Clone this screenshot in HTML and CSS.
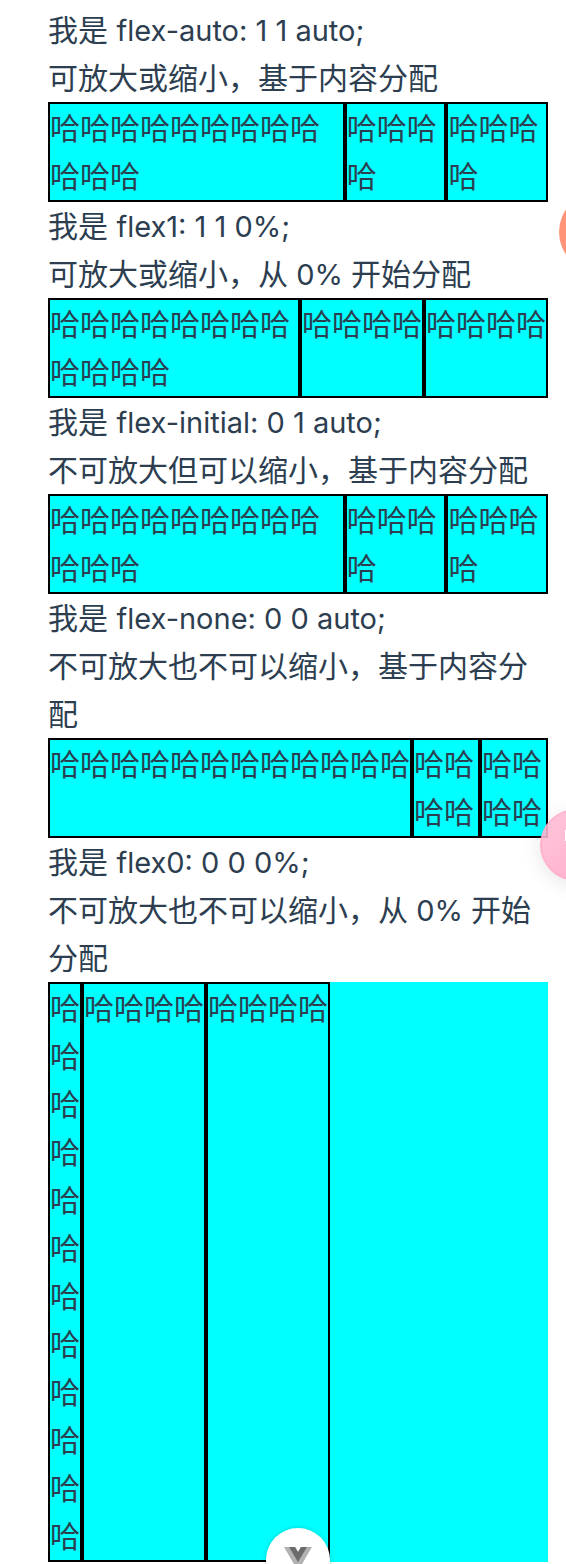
FILE: index.html
```html
<!DOCTYPE html>
<html lang="zh-CN">
<head>
<meta charset="utf-8">
<meta name="viewport" content="width=device-width, initial-scale=1">
<title>flex</title>
<link rel="stylesheet" href="styles.css">
</head>
<body>
<div class="page">
  <main class="content">
    <section>
      <div>我是 <span class="latin">flex-auto: 1 1 auto;</span></div>
      <div>可放大或缩小，基于内容分配</div>
      <div class="row">
        <div class="item flex-auto">哈哈哈哈哈哈哈哈哈哈哈哈</div>
        <div class="item">哈哈哈哈</div>
        <div class="item">哈哈哈哈</div>
      </div>
    </section>
    <section>
      <div>我是 <span class="latin">flex1: 1 1 0%;</span></div>
      <div>可放大或缩小，从<span class="latin"> 0% </span>开始分配</div>
      <div class="row">
        <div class="item flex-one">哈哈哈哈哈哈哈哈哈哈哈哈</div>
        <div class="item">哈哈哈哈</div>
        <div class="item">哈哈哈哈</div>
      </div>
    </section>
    <section>
      <div>我是 <span class="latin">flex-initial: 0 1 auto;</span></div>
      <div>不可放大但可以缩小，基于内容分配</div>
      <div class="row">
        <div class="item flex-initial">哈哈哈哈哈哈哈哈哈哈哈哈</div>
        <div class="item">哈哈哈哈</div>
        <div class="item">哈哈哈哈</div>
      </div>
    </section>
    <section>
      <div>我是 <span class="latin">flex-none: 0 0 auto;</span></div>
      <div>不可放大也不可以缩小，基于内容分配</div>
      <div class="row">
        <div class="item flex-none">哈哈哈哈哈哈哈哈哈哈哈哈</div>
        <div class="item">哈哈哈哈</div>
        <div class="item">哈哈哈哈</div>
      </div>
    </section>
    <section>
      <div>我是 <span class="latin">flex0: 0 0 0%;</span></div>
      <div>不可放大也不可以缩小，从<span class="latin"> 0% </span>开始分配</div>
      <div class="row">
        <div class="item flex-zero">哈哈哈哈哈哈哈哈哈哈哈哈</div>
        <div class="item">哈哈哈哈</div>
        <div class="item">哈哈哈哈</div>
      </div>
    </section>
  </main>
  <div class="bubble bubble-coral"></div>
  <div class="bubble bubble-pink"><span class="bubble-mark"></span></div>
  <div class="bubble bubble-vue">
    <svg class="logo" viewBox="0 0 28 24" aria-hidden="true">
      <path fill="#b2b2b2" d="M0 0h11l3 5 3-5h11L14 24z"/>
      <path fill="#6b6b6b" d="M5 0h6l3 5 3-5h6l-9 15z"/>
    </svg>
  </div>
</div>
</body>
</html>
```

FILE: styles.css
```css
* {
  box-sizing: border-box;
}

body {
  margin: 0;
  background: #fff;
  color: #2c3e50;
  font-family: Inter, "Noto Sans CJK SC", sans-serif;
  font-size: 30px;
  line-height: 48px;
}

.page {
  position: relative;
  overflow: hidden;
}

.content {
  padding: 6px 18px 2px 48px;
}

.latin {
  font-size: 29px;
  line-height: 1;
}

.row {
  display: flex;
  background: #0ff;
}

.item {
  border: 2px solid #000;
}

.flex-auto {
  flex: 1 1 auto;
}

.flex-one {
  flex: 1 1 0%;
}

.flex-initial {
  flex: 0 1 auto;
}

.flex-none {
  flex: 0 0 auto;
}

.flex-zero {
  flex: 0 0 0%;
}

.bubble {
  position: absolute;
  border-radius: 50%;
}

.bubble-coral {
  top: 192px;
  right: -73px;
  width: 80px;
  height: 80px;
  background: #ff9478;
}

.bubble-pink {
  top: 809px;
  right: -46px;
  width: 72px;
  height: 72px;
  border: 2px solid rgba(255, 170, 200, 0.5);
  background: linear-gradient(135deg, rgba(255, 190, 215, 0.88), rgba(255, 160, 195, 0.88));
  background-clip: border-box;
  box-shadow: 0 4px 20px rgba(0, 0, 0, 0.1);
}

.bubble-mark {
  position: absolute;
  top: 19px;
  left: 23px;
  width: 12px;
  height: 11px;
  background: #fff;
}

.bubble-vue {
  bottom: -28px;
  left: 47%;
  width: 64px;
  height: 64px;
  background: #fff;
  box-shadow: 0 0 4px rgba(0, 0, 0, 0.2);
}

.logo {
  position: absolute;
  top: 19px;
  left: 18px;
  width: 28px;
  height: 24px;
}
```
